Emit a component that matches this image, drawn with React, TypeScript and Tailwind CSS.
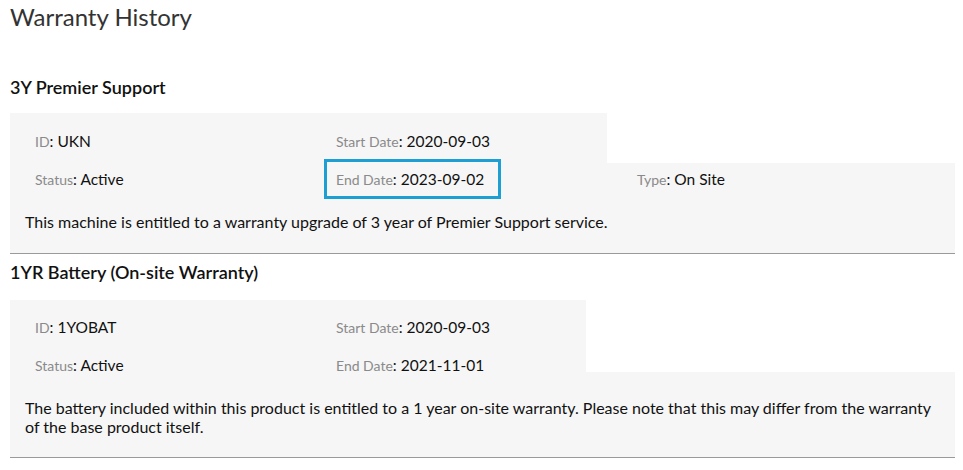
import React from "react";

type Field = { label: string; value: string; highlight?: boolean };

function Cell({ label, value, highlight }: Field) {
  return (
    <div className="relative w-[301px] shrink-0 leading-[22px]">
      {highlight && (
        <span className="absolute left-[-12px] top-[-9px] h-[40px] w-[177px] border-[3px] border-[#1e9fd4]" />
      )}
      <span className="text-[14px] text-[#8a8a8a]">{label}</span>
      <span className="text-[15.5px] text-[#111]">: {value}</span>
    </div>
  );
}

function Row({ fields }: { fields: Field[] }) {
  return (
    <div className="flex pl-[25px]">
      {fields.map((f) => (
        <Cell key={f.label} {...f} />
      ))}
    </div>
  );
}

export default function App() {
  return (
    <div className="w-[963px] h-[470px] bg-white px-[10px] font-['Lato',sans-serif] text-[#111]">
      <h1 className="pt-[2px] text-[24px] leading-[30px] text-[#333]">Warranty History</h1>

      <h2 className="mt-[43px] text-[18px] font-semibold leading-[24px]">3Y Premier Support</h2>
      <div className="mt-[14px] w-[597px] h-[50px] bg-[#f6f6f6] pt-[17px]">
        <Row
          fields={[
            { label: "ID", value: "UKN" },
            { label: "Start Date", value: "2020-09-03" },
          ]}
        />
      </div>
      <div className="w-[945px] h-[90px] bg-[#f6f6f6] pt-[5px]">
        <div className="relative">
          <div className="absolute left-0 top-0 w-full">
            <Row
              fields={[
                { label: "Status", value: "Active" },
                { label: "End Date", value: "2023-09-02", highlight: true },
                { label: "Type", value: "On Site" },
              ]}
            />
          </div>
        </div>
        <p className="pt-[44px] pl-[15px] pr-[15px] text-[16px] leading-[19px]">
          This machine is entitled to a warranty upgrade of 3 year of Premier Support service.
        </p>
      </div>
      <div className="h-px w-[945px] bg-[#9a9a9a]" />

      <h2 className="mt-[6px] text-[18px] font-semibold leading-[24px]">1YR Battery (On-site Warranty)</h2>
      <div className="mt-[16px] w-[576px] h-[72px] bg-[#f6f6f6] pt-[16px] flex flex-col gap-[15px]">
        <Row
          fields={[
            { label: "ID", value: "1YOBAT" },
            { label: "Start Date", value: "2020-09-03" },
          ]}
        />
        <Row
          fields={[
            { label: "Status", value: "Active" },
            { label: "End Date", value: "2021-11-01" },
          ]}
        />
      </div>
      <div className="w-[945px] h-[85px] bg-[#f6f6f6] pt-[26px] pl-[15px] pr-[20px]">
        <p className="text-[16px] leading-[19px]">
          The battery included within this product is entitled to a 1 year on-site warranty. Please note that this may differ from the warranty of the base product itself.
        </p>
      </div>
      <div className="h-px w-[945px] bg-[#9a9a9a]" />
    </div>
  );
}
